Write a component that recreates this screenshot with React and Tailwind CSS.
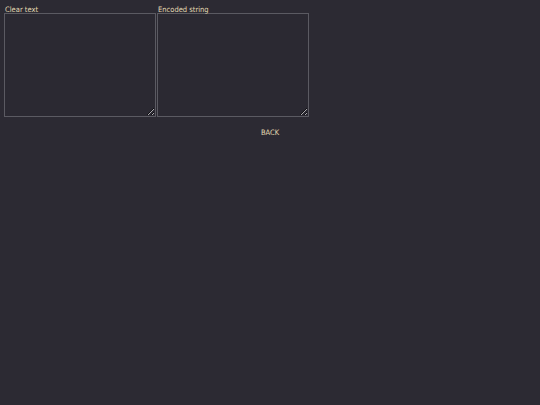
import React from 'react';

function Field({ label }) {
    return (
        <div className="flex flex-col">
            <label className="relative h-[9px] pl-px text-[7.5px] leading-[11px] text-[#e4dcb4]">{label}</label>
            <textarea className="h-[104px] w-[152px] resize border border-[#5b5a62] bg-[#2b2932] text-[8px] text-[#e4dcb4] outline-none" />
        </div>
    );
}

export default function App() {
    return (
        <div className="min-h-[405px] bg-[#2c2a33] pt-[4px] font-['DejaVu_Sans_Condensed','DejaVu_Sans',sans-serif]">
            <div className="flex gap-px pl-[4px]">
                <Field label="Clear text" />
                <Field label="Encoded string" />
            </div>
            <div className="mt-[11px] flex justify-center">
                <button className="text-[7.5px] leading-[10px] text-[#e4dcb4]">BACK</button>
            </div>
        </div>
    );
}
